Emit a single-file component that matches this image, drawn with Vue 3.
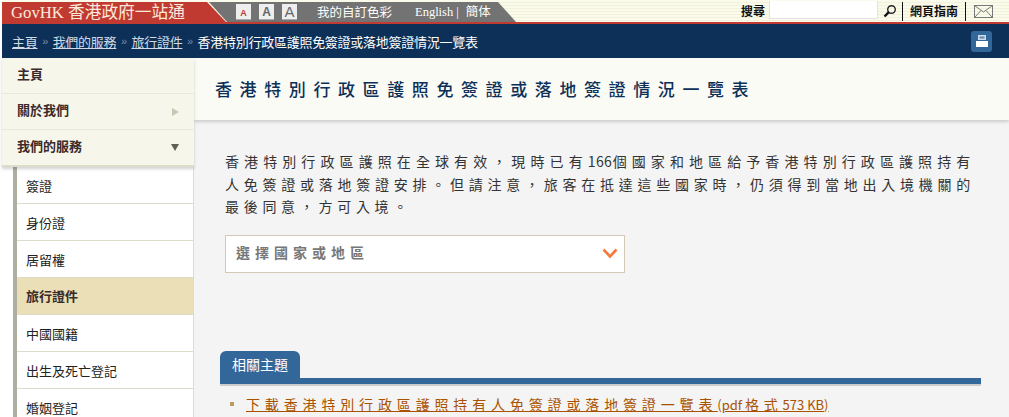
<template>
  <div class="page">
    <header class="topbar">
      <div class="brand">GovHK 香港政府一站通</div>
      <div class="tools">
        <div class="sizes">
          <span class="size small">A</span>
          <span class="size mid">A</span>
          <span class="size big">A</span>
        </div>
        <span class="tool-link colour">我的自訂色彩</span>
        <span class="tool-link lang">English<i>|</i>簡体</span>
      </div>
      <div class="search">
        <b class="search-label">搜尋</b>
        <div class="search-box"></div>
        <svg class="lens" width="14" height="14" viewBox="0 0 14 14">
          <circle cx="8.5" cy="5.5" r="3.8" fill="none" stroke="#222" stroke-width="1.4" />
          <path d="M5.8 8.2 1.5 12.5" stroke="#111" stroke-width="2.4" />
        </svg>
        <b class="guide">網頁指南</b>
        <svg class="mail" width="19" height="13" viewBox="0 0 19 13">
          <rect x="0.5" y="0.5" width="18" height="12" fill="none" stroke="#777" />
          <path d="M0.5 0.5 9.5 7 18.5 0.5M0.5 12.5 7 5.5M18.5 12.5 12 5.5" fill="none" stroke="#777" />
        </svg>
      </div>
    </header>

    <nav class="crumbs">
      <template v-for="c in crumbs" :key="c">
        <a class="crumb">{{ c }}</a>
        <span class="sep">»</span>
      </template>
      <span class="current">香港特別行政區護照免簽證或落地簽證情況一覽表</span>
      <span class="print">
        <svg width="14" height="14" viewBox="0 0 14 14">
          <rect x="3" y="1" width="8" height="5" fill="#cfdbe8" />
          <rect x="4.5" y="2.5" width="5" height="2" fill="#5f88b2" />
          <rect x="1" y="7" width="12" height="6" fill="#fff" />
        </svg>
      </span>
    </nav>

    <div class="body">
      <aside class="side">
        <ul class="main-menu">
          <li v-for="m in mainMenu" :key="m.label">
            <span>{{ m.label }}</span>
            <i v-if="m.arrow" :class="['arrow', m.arrow]"></i>
          </li>
        </ul>
        <ul class="sub-menu">
          <li v-for="s in subMenu" :key="s" :class="{ active: s === '旅行證件' }">{{ s }}</li>
        </ul>
      </aside>

      <main class="content">
        <h1 class="title">香港特別行政區護照免簽證或落地簽證情況一覽表</h1>
        <div class="inner">
          <p class="intro">香港特別行政區護照在全球有效，現時已有<span class="num">166</span>個國家和地區給予香港特別行政區護照持有人免簽證或落地簽證安排。但請注意，旅客在抵達這些國家時，仍須得到當地出入境機關的最後同意，方可入境。</p>
          <div class="select">
            <span>選擇國家或地區</span>
            <svg width="16" height="11" viewBox="0 0 16 11">
              <path d="M1.5 1.5 8 8.5 14.5 1.5" fill="none" stroke="#f47b3e" stroke-width="2.6" />
            </svg>
          </div>
          <div class="related">
            <div class="tab">相關主題</div>
            <div class="rule"></div>
            <a class="dl"><i class="bullet"></i><u>下載香港特別行政區護照持有人免簽證或落地簽證一覽表<span class="latin">(pdf </span>格式<span class="latin">573 KB)</span></u></a>
          </div>
        </div>
      </main>
    </div>
  </div>
</template>

<script setup>
const crumbs = ['主頁', '我們的服務', '旅行證件']

const mainMenu = [
  { label: '主頁' },
  { label: '關於我們', arrow: 'right' },
  { label: '我們的服務', arrow: 'down' },
]

const subMenu = ['簽證', '身份證', '居留權', '旅行證件', '中國國籍', '出生及死亡登記', '婚姻登記']
</script>

<style>
html, body {
  margin: 0;
  background: #fff;
  overflow: hidden;
}
</style>

<style scoped>
.page {
  width: 1009px;
  height: 417px;
  overflow: hidden;
  padding-left: 2px;
  box-sizing: border-box;
  font-family: "Noto Sans CJK TC", "Liberation Sans", sans-serif;
  font-size: 13px;
  color: #222;
}

.topbar {
  display: flex;
  height: 22px;
  border-bottom: 2px solid #c13a31;
  background: repeating-linear-gradient(#fbfbec 0 2px, #f1f1dc 2px 3px);
}
.brand {
  width: 224px;
  padding: 2px 0 0 9px;
  box-sizing: border-box;
  margin-top: 2px;
  height: 20px;
  background: #c13a31;
  color: #fbe9dc;
  font-family: "Liberation Serif", "Noto Sans CJK TC", serif;
  font-size: 16.7px;
  line-height: 17px;
  white-space: nowrap;
  clip-path: polygon(0 0, 205px 0, 224px 20px, 0 20px);
}
.tools {
  display: flex;
  align-items: center;
  width: 307px;
  margin: 2px 0 0 -17px;
  height: 20px;
  background: #737373;
  color: #fff;
  clip-path: polygon(0 0, 289px 0, 307px 20px, 18px 20px);
}
.sizes {
  display: flex;
  gap: 8px;
  margin-left: 27px;
}
.size {
  width: 15px;
  height: 15px;
  background: #eee;
  border-bottom: 1px solid #aaa;
  text-align: center;
  font-family: "Liberation Sans", sans-serif;
  font-weight: bold;
  color: #666;
}
.size.small { font-size: 9px; line-height: 18px; color: #c13a31; }
.size.mid { font-size: 12px; line-height: 16px; }
.size.big { font-size: 15px; line-height: 15px; font-weight: normal; }
.tool-link {
  font-size: 12.5px;
  line-height: 18px;
  white-space: nowrap;
}
.colour { margin-left: 20px; }
.lang {
  margin-left: 23px;
  font-family: "Liberation Serif", "Noto Sans CJK TC", serif;
}
.lang i {
  font-style: normal;
  margin: 0 7px 0 3px;
}
.search {
  display: flex;
  align-items: center;
  margin-left: auto;
  height: 22px;
  position: relative;
}
.search-label {
  font-size: 12px;
  color: #111;
  margin-top: -2px;
}
.search-box {
  width: 107px;
  height: 17px;
  margin: -3px 0 0 4px;
  background: #fff;
  border: solid #e0e2e6;
  border-width: 0 1px 1px;
}
.lens {
  margin: 0 5px 0 5px;
}
.guide {
  border-left: 1px solid #111;
  border-right: 1px solid #111;
  padding: 0 7px;
  height: 19px;
  line-height: 18px;
  font-size: 12px;
  color: #111;
}
.mail {
  margin: 0 16px 0 8px;
}

.crumbs {
  display: flex;
  align-items: center;
  height: 34px;
  padding-left: 10px;
  background: #0d3058;
  color: #fff;
  font-size: 13px;
  letter-spacing: -0.27px;
  white-space: nowrap;
}
.crumb {
  color: #d0dbe6;
  text-decoration: underline;
}
.sep {
  color: #7a8ea8;
  margin: 0 4.67px;
  font-family: "Liberation Sans", sans-serif;
  font-size: 11px;
}
.print {
  display: flex;
  align-items: center;
  justify-content: center;
  width: 21px;
  height: 21px;
  margin: 0 17px 0 auto;
  border-radius: 3px;
  background: #336699;
}

.body {
  display: flex;
  height: 359px;
  margin-left: -2px;
}
.side {
  width: 194px;
  flex: none;
  padding-left: 2px;
  box-sizing: border-box;
}
.main-menu,
.sub-menu {
  list-style: none;
  margin: 0;
  padding: 0;
}
.main-menu {
  background: #f7f6ea;
  border-bottom: 2px solid #dedccb;
  box-shadow: 0 2px 3px rgba(0, 0, 0, 0.18);
  position: relative;
}
.main-menu li {
  display: flex;
  align-items: center;
  justify-content: space-between;
  height: 35px;
  padding: 0 15px 0 15px;
  border-bottom: 1px solid #e9e7d6;
  font-weight: bold;
  color: #3a2a2a;
}
.main-menu li span {
  margin-top: -5px;
}
.main-menu li:last-child {
  border-bottom: 0;
}
.arrow {
  width: 0;
  height: 0;
}
.arrow.right {
  border-left: 7px solid #c8c8b4;
  border-top: 4px solid transparent;
  border-bottom: 4px solid transparent;
}
.arrow.down {
  border-top: 7px solid #605f56;
  border-left: 4px solid transparent;
  border-right: 4px solid transparent;
}
.sub-menu {
  margin-left: 11px;
  border-left: 4px solid #aeaf9f;
  border-right: 1px solid #dcdccb;
  background: #fff;
}
.sub-menu li {
  height: 36px;
  line-height: 38px;
  padding-left: 9px;
  border-bottom: 1px solid #dcdccb;
}
.sub-menu li.active {
  background: #ebdfb8;
  font-weight: bold;
  color: #3a2a2a;
  line-height: 36px;
}

.content {
  flex: 1;
  background: #f4f4f4;
}
.title {
  margin: 0;
  height: 62px;
  padding-left: 21px;
  line-height: 61px;
  background: #fbfbf6;
  box-shadow: 0 2px 3px rgba(0, 0, 0, 0.16);
  color: #0d3058;
  font-size: 17px;
  font-weight: 500;
  letter-spacing: 7.6px;
  white-space: nowrap;
}
.inner {
  padding: 30px 28px 0 31px;
}
.intro {
  margin: 0;
  width: 750px;
  font-size: 14px;
  line-height: 22.5px;
  letter-spacing: 4.7px;
  text-align: justify;
  color: #333;
}
.num {
  letter-spacing: 0.4px;
}
.select {
  display: flex;
  align-items: center;
  justify-content: space-between;
  width: 400px;
  height: 38px;
  margin-top: 17px;
  padding: 0 6px 0 10px;
  box-sizing: border-box;
  background: #fff;
  border: 1px solid #d3c9b5;
  color: #777;
  font-size: 14px;
  font-weight: bold;
  letter-spacing: 5px;
}
.select span {
  margin-top: -4px;
}
.related {
  margin: 78px 0 0 -5px;
}
.tab {
  width: 80px;
  height: 27px;
  line-height: 27px;
  text-align: center;
  border-radius: 6px 6px 0 0;
  background: #336699;
  color: #fff;
  font-size: 14px;
}
.rule {
  height: 6px;
  background: #336699;
  border-bottom: 2px solid #ccc;
  width: 761px;
}
.dl {
  display: flex;
  align-items: center;
  margin-top: 8px;
  color: #a85200;
  font-size: 14px;
  letter-spacing: 4.85px;
  white-space: nowrap;
}
.latin {
  letter-spacing: 0;
  font-size: 13px;
}
.bullet {
  width: 4px;
  height: 4px;
  margin: 0 12px 0 10px;
  background: #bb9a5b;
}
</style>
